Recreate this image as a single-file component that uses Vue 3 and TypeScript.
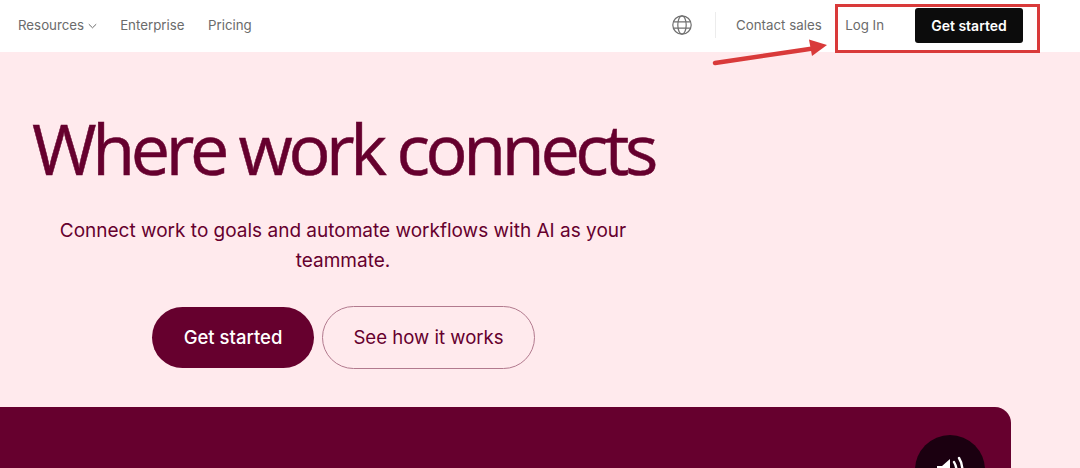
<script setup lang="ts">
const links: string[] = ['Enterprise', 'Pricing']
</script>

<template>
  <div class="page">
    <header class="nav">
      <nav class="left">
        <a class="link res">Resources
          <svg class="chev" width="9" height="6" viewBox="0 0 9 6"><path d="M.8 1.2 4.5 4.8 8.2 1.2" fill="none" stroke="#6b6b6b" stroke-width="1"/></svg>
        </a>
        <a v-for="l in links" :key="l" class="link">{{ l }}</a>
      </nav>
      <div class="right">
        <svg class="globe" width="20" height="20" viewBox="0 0 20 20" fill="none" stroke="#6f6f6f" stroke-width="1.2">
          <circle cx="10" cy="10" r="9.2"/>
          <ellipse cx="10" cy="10" rx="4.2" ry="9.2"/>
          <path d="M1.6 6.8h16.8M1.6 13.2h16.8"/>
        </svg>
        <span class="divider"></span>
        <a class="link contact">Contact sales</a>
        <a class="link login">Log In</a>
        <button class="black">Get started</button>
      </div>
    </header>
    <main class="hero">
      <h1>Where work connects</h1>
      <p>Connect work to goals and automate workflows with AI as your teammate.</p>
      <div class="cta">
        <button class="primary">Get started</button>
        <button class="ghost">See how it works</button>
      </div>
      <section class="panel">
        <span class="sound">
          <svg width="40" height="40" viewBox="0 0 40 40" fill="none">
            <path d="M7 16h5l8-7v22l-8-7H7z" fill="#fff"/>
            <path d="M24 12c3 5 3 11 0 16M29 8c4.500 7 4.500 17 0 24" stroke="#fff" stroke-width="2.400" stroke-linecap="round"/>
          </svg>
        </span>
      </section>
    </main>
    <div class="box"></div>
    <svg class="arrow" width="130" height="30" viewBox="0 0 130 30">
      <path d="M2 22 100 7.500" stroke="#d93a3a" stroke-width="4.500" stroke-linecap="round"/>
      <path d="M114 4 96 -1.500 99 15z" fill="#d93a3a"/>
    </svg>
  </div>
</template>

<style>
html, body { margin: 0; background: #fff; overflow: hidden; }
</style>

<style scoped>
.page { position: relative; width: 1080px; height: 468px; overflow: hidden; font-family: Inter, "Liberation Sans", sans-serif; }
.nav { height: 52px; display: flex; justify-content: space-between; align-items: center; padding: 0 57px 2px 18px; box-sizing: border-box; background: #fff; }
.left, .right { display: flex; align-items: center; }
.left { gap: 23.500px; }
.link { font-size: 13.300px; color: #6b6b6b; white-space: nowrap; }
.res { display: flex; align-items: center; gap: 3.500px; }
.chev { margin-top: 2px; }
.globe { margin-right: 23px; }
.divider { width: 1px; height: 26px; background: #ececec; margin-right: 20px; }
.contact { margin-right: 23.500px; }
.login { margin-right: 31px; }
.black { width: 108px; height: 35px; background: #0c0c0c; color: #fff; border: 0; border-radius: 3px; font: 600 14px Inter, "Liberation Sans", sans-serif; padding: 0; }
.hero { height: 416px; background: #ffeaed; color: #66002e; box-sizing: border-box; padding-top: 57px; position: relative; }
h1 { margin: 0 0 0 32px; font: 400 70px/78px "Open Sans", sans-serif; letter-spacing: -4.400px; color: #66002e; white-space: nowrap; -webkit-text-stroke: .5px #66002e; }
p { width: 600px; margin: 29px 0 0 43px; text-align: center; font-size: 19px; line-height: 30px; color: #66002e; }
.cta { display: flex; gap: 8px; margin: 30px 0 0 152px; align-items: center; }
button { cursor: default; }
.primary { width: 162px; height: 61px; border: 0; border-radius: 31px; background: #66002e; color: #fff; font: 450 18.500px Inter, "Liberation Sans", sans-serif; padding: 0 0 2px; }
.ghost { width: 213px; height: 63px; border: 1px solid #b27a8e; border-radius: 32px; background: transparent; color: #66002e; font: 400 18.600px Inter, "Liberation Sans", sans-serif; padding: 0 0 2px; }
.panel { position: absolute; left: 0; top: 355px; width: 1011px; height: 81px; background: #66002e; border-radius: 0 16px 0 0; }
.sound { position: absolute; left: 915px; top: 28px; width: 70px; height: 70px; border-radius: 50%; background: #1b0010; display: flex; align-items: center; justify-content: center; }
.box { position: absolute; left: 835px; top: 4px; width: 205px; height: 49px; box-sizing: border-box; border: 3px solid #d93a3a; }
.arrow { position: absolute; left: 713px; top: 41px; overflow: visible; }
</style>
